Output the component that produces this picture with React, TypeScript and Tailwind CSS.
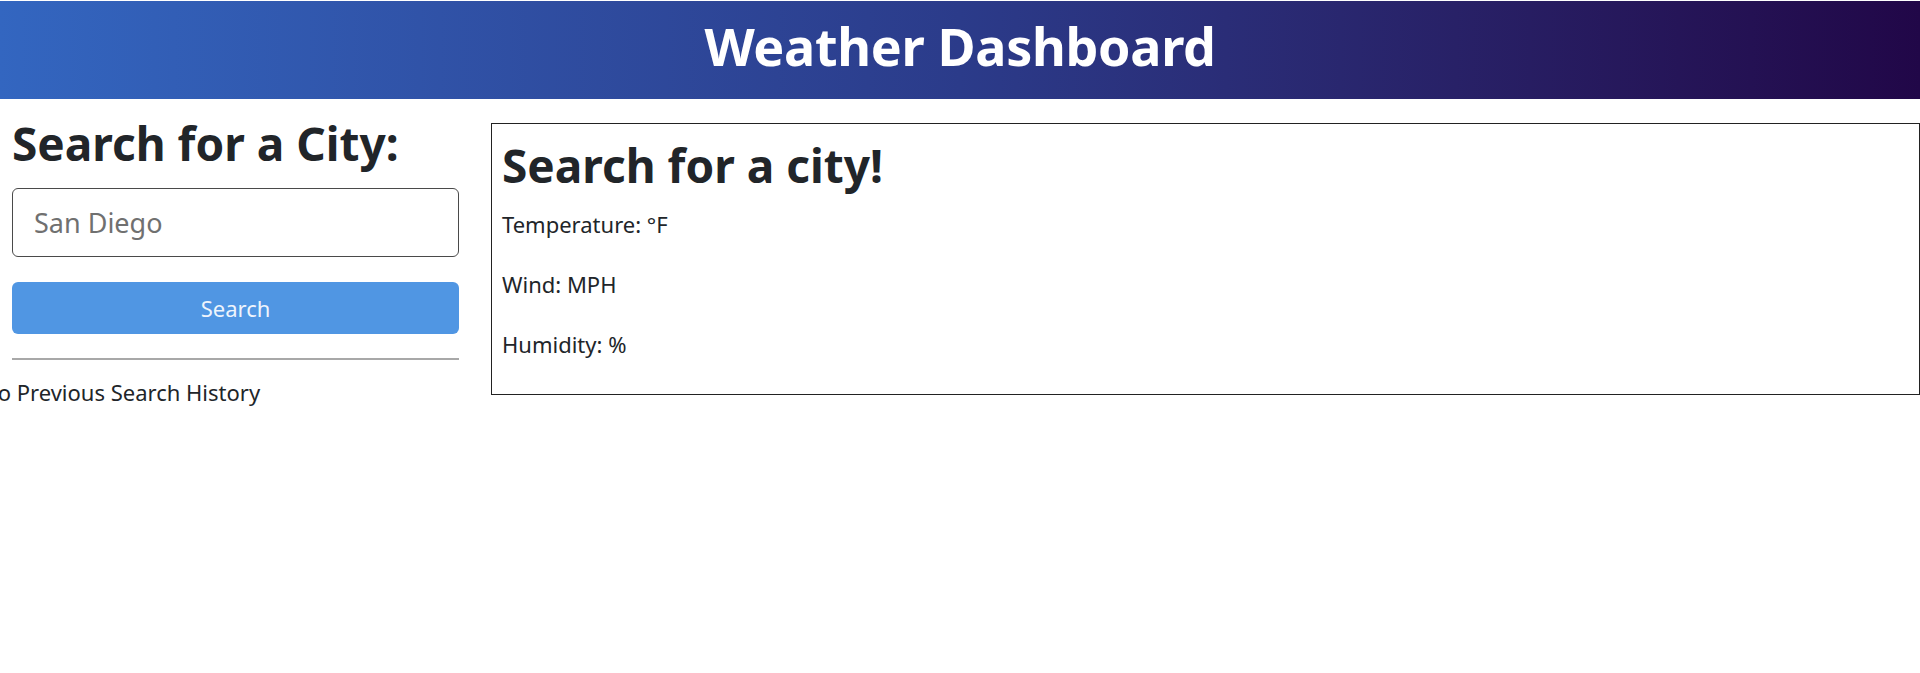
export default function App() {
  return (
    <div className="min-h-[673px] bg-white text-[#212529] font-['Noto_Sans',sans-serif]">
      <header className="mt-px flex h-[98px] items-center justify-center bg-gradient-to-r from-[#3366c0] via-[#2b3b8a] to-[#210748] pb-[8px]">
        <h1 className="text-[52px] font-bold leading-none tracking-[-0.3px] text-white">Weather Dashboard</h1>
      </header>

      <div className="flex items-start gap-[32px] pt-[24px]">
        <aside className="w-[459px] shrink-0 pl-[12px]">
          <h2 className="-mt-[7px] text-[46px] font-bold leading-[1.2]">Search for a City:</h2>
          <form className="mt-[17px] flex flex-col gap-[25px]" onSubmit={(e) => e.preventDefault()}>
            <input
              type="text"
              placeholder="San Diego"
              className="h-[69px] w-full rounded-[6px] border border-[#4a4a4a] px-[21px] text-[27px] placeholder:text-[#707070] outline-none"
            />
            <button
              type="submit"
              className="h-[52px] w-full rounded-[6px] bg-[#5096e3] text-[22px] text-[#eef4fc]"
            >
              Search
            </button>
          </form>
          <hr className="mt-[24px] border-t-2 border-[#a8a8a8]" />
          <p className="-ml-[31px] mt-[16px] whitespace-nowrap text-[22px] leading-[1.5]">No Previous Search History</p>
        </aside>

        <section className="flex-1 border border-[#222] px-[10px] pb-[8px] pt-[14px]">
          <h1 className="mb-[13px] text-[46px] font-bold leading-[1.2]">Search for a city!</h1>
          <p className="mb-[24px] text-[22px] leading-[36px]">Temperature: °F</p>
          <p className="mb-[24px] text-[22px] leading-[36px]">Wind: MPH</p>
          <p className="mb-[24px] text-[22px] leading-[36px]">Humidity: %</p>
        </section>
      </div>
    </div>
  );
}
